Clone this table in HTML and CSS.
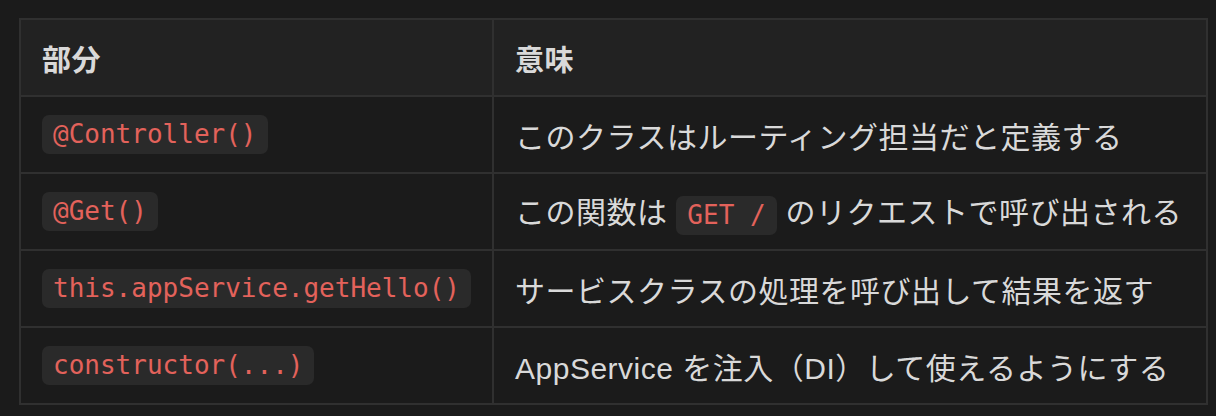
FILE: index.html
```html
<!DOCTYPE html>
<html lang="ja">
<head>
<meta charset="utf-8">
<link rel="stylesheet" href="styles.css">
</head>
<body>
<div class="wrap">
<table class="tbl">
  <thead>
    <tr><th class="c1">部分</th><th class="c2">意味</th></tr>
  </thead>
  <tbody>
    <tr><td><code>@Controller()</code></td><td>このクラスはルーティング担当だと定義する</td></tr>
    <tr><td><code>@Get()</code></td><td>この関数は <code>GET /</code> のリクエストで呼び出される</td></tr>
    <tr><td><code>this.appService.getHello()</code></td><td>サービスクラスの処理を呼び出して結果を返す</td></tr>
    <tr><td><code>constructor(...)</code></td><td>AppService を注入（DI）して使えるようにする</td></tr>
  </tbody>
</table>
</div>
</body>
</html>
```
FILE: styles.css
```css
html, body {
  margin: 0;
  padding: 0;
  background: #1b1b1b;
}
.wrap {
  padding: 18px 9px 0 19px;
}
.tbl {
  width: 1189px;
  border-collapse: collapse;
  font-family: "Liberation Sans", "Noto Sans CJK JP", sans-serif;
  font-size: 30px;
  letter-spacing: 0.5px;
  color: #d9d9d9;
}
.tbl th, .tbl td {
  border: 2px solid #303030;
  height: 75px;
  padding: 0 21px;
  text-align: left;
  vertical-align: middle;
  white-space: nowrap;
}
.tbl thead th {
  background: #222222;
  font-weight: bold;
  font-size: 29px;
  letter-spacing: 0.5px;
}
.c1 { width: 428px; }
code {
  display: inline-block;
  font-family: "DejaVu Sans Mono", monospace;
  font-size: 26px;
  letter-spacing: 0;
  line-height: 30px;
  padding: 4px 11px 5px;
  border-radius: 7px;
  background: #2a2a2a;
  color: #e3625b;
  vertical-align: middle;
}
```
